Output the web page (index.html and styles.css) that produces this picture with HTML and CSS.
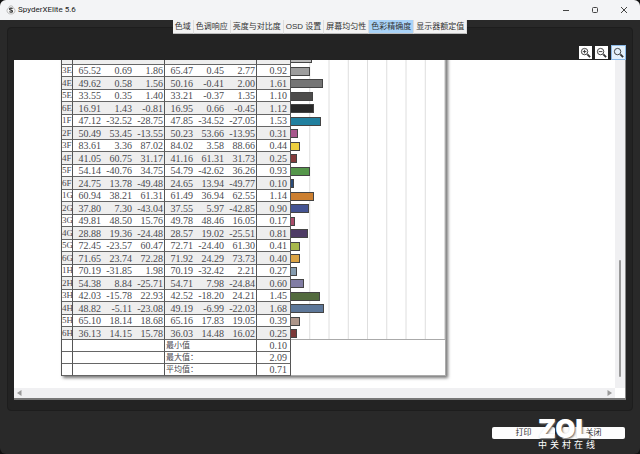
FILE: index.html
```html
<!DOCTYPE html>
<html lang="zh-CN">
<head>
<meta charset="utf-8">
<title>SpyderXElite 5.6</title>
<link rel="stylesheet" href="styles.css">
</head>
<body>
<div class="window">
  <header class="titlebar">
    <svg class="app-icon" viewBox="0 0 20 20" aria-hidden="true"><path d="M6 5.500a4 4 0 0 1 8 0a6 6 0 0 1 4 5.500c0 4-3 7-8 7s-8-3-8-7a6 6 0 0 1 4-5.500z" fill="#f8f8f8" stroke="#aaa" stroke-width="1.500"/><path d="M13 7.500c-1-2-6-2-6 .5c0 3 6 1.500 6 4.500c0 2.500-5 2.500-6 .5" fill="none" stroke="#333" stroke-width="2.500"/></svg>
    <span class="app-name">SpyderXElite 5.6</span>
    <div class="controls">
      <button aria-label="最小化"><svg viewBox="0 0 8 8"><path d="M1 4.500h6"/></svg></button>
      <button aria-label="最大化"><svg viewBox="0 0 8 8"><rect x="1.500" y="1.500" width="5" height="5" rx="1"/></svg></button>
      <button aria-label="关闭窗口"><svg viewBox="0 0 8 8"><path d="M1 1l6 6M7 1l-6 6"/></svg></button>
    </div>
  </header>
  <nav class="tabs">
    <button>色域</button><button>色调响应</button><button>亮度与对比度</button><button>OSD 设置</button><button>屏幕均匀性</button><button class="active">色彩精确度</button><button>显示器额定值</button>
  </nav>
  <main class="panel">
    <div class="tools">
      <button aria-label="放大"><svg viewBox="0 0 12 12"><circle cx="5" cy="5" r="3.500"/><path d="M3 5h4M5 3v4"/><path class="handle" d="M8 8l3 3"/></svg></button>
      <button aria-label="缩小"><svg viewBox="0 0 12 12"><circle cx="5" cy="5" r="3.500"/><path d="M3 5h4"/><path class="handle" d="M8 8l3 3"/></svg></button>
      <button class="selected" aria-label="适合窗口"><svg viewBox="0 0 12 12"><circle cx="5" cy="5" r="3.500"/><path class="handle" d="M8 8l3 3"/></svg></button>
    </div>
    <div class="viewer">
      <div class="canvas">
        <table class="report">
          <colgroup><col class="c-id"><col class="c-l"><col class="c-a"><col class="c-b"><col class="c-l"><col class="c-a"><col class="c-b"><col class="c-d"><col></colgroup>
          <tbody class="data">
            <tr><th></th><td></td><td></td><td></td><td></td><td></td><td></td><td></td><td><i style="--v:1.02;--c:#bbb"></i></td></tr>
            <tr><th>3E</th><td>65.52</td><td>0.69</td><td>1.86</td><td>65.47</td><td>0.45</td><td>2.77</td><td>0.92</td><td><i style="--v:.92;--c:#9d9d9d"></i></td></tr>
            <tr><th>4E</th><td>49.62</td><td>0.58</td><td>1.56</td><td>50.16</td><td>-0.41</td><td>2.00</td><td>1.61</td><td><i style="--v:1.61;--c:#757575"></i></td></tr>
            <tr><th>5E</th><td>33.55</td><td>0.35</td><td>1.40</td><td>33.21</td><td>-0.37</td><td>1.35</td><td>1.10</td><td><i style="--v:1.10;--c:#4d4c4b"></i></td></tr>
            <tr><th>6E</th><td>16.91</td><td>1.43</td><td>-0.81</td><td>16.95</td><td>0.66</td><td>-0.45</td><td>1.12</td><td><i style="--v:1.12;--c:#292929"></i></td></tr>
            <tr><th>1F</th><td>47.12</td><td>-32.52</td><td>-28.75</td><td>47.85</td><td>-34.52</td><td>-27.05</td><td>1.53</td><td><i style="--v:1.53;--c:#21809f"></i></td></tr>
            <tr><th>2F</th><td>50.49</td><td>53.45</td><td>-13.55</td><td>50.23</td><td>53.66</td><td>-13.95</td><td>0.31</td><td><i style="--v:.31;--c:#a7588d"></i></td></tr>
            <tr><th>3F</th><td>83.61</td><td>3.36</td><td>87.02</td><td>84.02</td><td>3.58</td><td>88.66</td><td>0.44</td><td><i style="--v:.44;--c:#edcf3f"></i></td></tr>
            <tr><th>4F</th><td>41.05</td><td>60.75</td><td>31.17</td><td>41.16</td><td>61.31</td><td>31.73</td><td>0.25</td><td><i style="--v:.25;--c:#843b3b"></i></td></tr>
            <tr><th>5F</th><td>54.14</td><td>-40.76</td><td>34.75</td><td>54.79</td><td>-42.62</td><td>36.26</td><td>0.93</td><td><i style="--v:.93;--c:#55964a"></i></td></tr>
            <tr><th>6F</th><td>24.75</td><td>13.78</td><td>-49.48</td><td>24.65</td><td>13.94</td><td>-49.77</td><td>0.10</td><td><i style="--v:.10;--c:#2b4c7b"></i></td></tr>
            <tr><th>1G</th><td>60.94</td><td>38.21</td><td>61.31</td><td>61.49</td><td>36.94</td><td>62.55</td><td>1.14</td><td><i style="--v:1.14;--c:#cc7f30"></i></td></tr>
            <tr><th>2G</th><td>37.80</td><td>7.30</td><td>-43.04</td><td>37.55</td><td>5.97</td><td>-42.85</td><td>0.90</td><td><i style="--v:.90;--c:#445493"></i></td></tr>
            <tr><th>3G</th><td>49.81</td><td>48.50</td><td>15.76</td><td>49.78</td><td>48.46</td><td>16.05</td><td>0.17</td><td><i style="--v:.17;--c:#a94d6a"></i></td></tr>
            <tr><th>4G</th><td>28.88</td><td>19.36</td><td>-24.48</td><td>28.57</td><td>19.02</td><td>-25.51</td><td>0.81</td><td><i style="--v:.81;--c:#4e3b65"></i></td></tr>
            <tr><th>5G</th><td>72.45</td><td>-23.57</td><td>60.47</td><td>72.71</td><td>-24.40</td><td>61.30</td><td>0.41</td><td><i style="--v:.41;--c:#a7b84b"></i></td></tr>
            <tr><th>6G</th><td>71.65</td><td>23.74</td><td>72.28</td><td>71.92</td><td>24.29</td><td>73.73</td><td>0.40</td><td><i style="--v:.40;--c:#dba344"></i></td></tr>
            <tr><th>1H</th><td>70.19</td><td>-31.85</td><td>1.98</td><td>70.19</td><td>-32.42</td><td>2.21</td><td>0.27</td><td><i style="--v:.27;--c:#859caf"></i></td></tr>
            <tr><th>2H</th><td>54.38</td><td>8.84</td><td>-25.71</td><td>54.71</td><td>7.98</td><td>-24.84</td><td>0.60</td><td><i style="--v:.60;--c:#817da4"></i></td></tr>
            <tr><th>3H</th><td>42.03</td><td>-15.78</td><td>22.93</td><td>42.52</td><td>-18.20</td><td>24.21</td><td>1.45</td><td><i style="--v:1.45;--c:#536b3e"></i></td></tr>
            <tr><th>4H</th><td>48.82</td><td>-5.11</td><td>-23.08</td><td>49.19</td><td>-6.99</td><td>-22.03</td><td>1.68</td><td><i style="--v:1.68;--c:#5d7799"></i></td></tr>
            <tr><th>5H</th><td>65.10</td><td>18.14</td><td>18.68</td><td>65.16</td><td>17.83</td><td>19.05</td><td>0.39</td><td><i style="--v:.39;--c:#ad968a"></i></td></tr>
            <tr><th>6H</th><td>36.13</td><td>14.15</td><td>15.78</td><td>36.03</td><td>14.48</td><td>16.02</td><td>0.25</td><td><i style="--v:.25;--c:#7b3838"></i></td></tr>
          </tbody>
          <tbody class="summary">
            <tr><td></td><td colspan="3"></td><td colspan="3">最小值</td><td>0.10</td><td></td></tr>
            <tr><td></td><td colspan="3"></td><td colspan="3">最大值：</td><td>2.09</td><td></td></tr>
            <tr><td></td><td colspan="3"></td><td colspan="3">平均值：</td><td>0.71</td><td></td></tr>
          </tbody>
        </table>
      </div>
      <div class="vbar"><div class="thumb"></div></div>
      <div class="hbar"><svg viewBox="0 0 5 6"><path d="M4.500 0v6L0 3z"/></svg><svg viewBox="0 0 5 6"><path d="M.5 0v6L5 3z"/></svg></div>
    </div>
  </main>
  <footer class="actions">
    <button>打印</button>
    <button>关闭</button>
    <div class="watermark"><strong>ZOL</strong><span>中关村在线</span></div>
  </footer>
</div>
</body>
</html>
```
FILE: styles.css
```css
* { box-sizing: border-box; }
html { background: #111; }
body { margin: 0; font-family: "Liberation Sans", "Noto Sans CJK SC", sans-serif; font-size: 8px; }
button { margin: 0; padding: 0; border: 0; font: inherit; color: inherit; }

.window { height: 100vh; display: flex; flex-direction: column; background: #292929; border-radius: 6px; overflow: hidden; }

.titlebar { height: 20px; flex: none; display: flex; align-items: center; padding: 0 12px 0 6px; background: #f3f4f6; color: #222; }
.app-icon { width: 10px; height: 10px; margin-right: 2px; }
.app-name { font-family: Roboto, sans-serif; line-height: 12px; }
.controls { margin-left: auto; display: flex; gap: 21px; }
.controls button { width: 8px; height: 8px; display: flex; background: none; }
.controls svg { width: 8px; height: 8px; fill: none; stroke: #444; }

.tabs { height: 14px; flex: none; display: flex; justify-content: center; position: relative; z-index: 1; }
.tabs button { padding: 0 2px; background: #f2f2f2; color: #333; line-height: 12px; border-right: 1px solid #ddd; border-bottom: 1px solid #bbb; white-space: nowrap; }
.tabs .active { background: #a9d3f8; }

.panel { flex: 1; min-height: 0; display: flex; flex-direction: column; margin: -7px 7px 0; padding: 17px 6px 10px; background: #232323; border: 1px solid #1d1d1d; border-radius: 4px; }
.tools { display: flex; justify-content: flex-end; align-items: center; gap: 3px; height: 15px; flex: none; }
.tools button { width: 13px; height: 13px; padding: 1px; background: #fff; display: flex; }
.tools .selected { width: 15px; height: 15px; padding: 1px; border: 1px solid #8ab8e6; background: #e4f1fc; }
.tools svg { width: 100%; height: 100%; fill: none; stroke: #333; }
.tools .handle { stroke-width: 2; }

.viewer { flex: 1; min-height: 0; display: grid; grid-template: minmax(0, 1fr) 10px / minmax(0, 1fr) 10px; background: #fff; border-right: 1px solid #888; border-bottom: 2px solid #777; }
.canvas { overflow: hidden; padding-left: 47px; }
.vbar { background: #f0f0f2; padding: 200px 4px 11px; }
.thumb { height: 100%; background: #999; border-radius: 1px; }
.hbar { background: #f0f0f2; display: flex; justify-content: space-between; align-items: center; padding: 0 3px; }
.hbar svg { width: 5px; height: 6px; fill: #999; }

.report { width: 385px; margin-top: -8px; table-layout: fixed; border-collapse: separate; border-spacing: 0; background: #fff; border-left: 1px solid #555; border-right: 1px solid #aaa; box-shadow: 2px 2px 3px #777; color: #4a4a50; font: 10px/11px "Liberation Serif", "Noto Sans CJK SC", serif; }
.c-id { width: 11px; }
.c-l { width: 29px; }
.c-a { width: 31px; }
.c-b { width: 32px; }
.c-d { width: 34px; }
.report td, .report th { height: 12px; padding: 0 1px 0 0; font-weight: 400; text-align: right; border-bottom: 1px solid #666; }
.data th { font-size: 9px; }
.data tr:nth-child(odd) > * { height: 13px; background-color: #eee; }
.data th, .data td:nth-child(4), .data td:nth-child(7), .data td:nth-child(8),
.summary td:not(:last-child) { border-right: 1px solid #555; }
.data td:nth-child(8), .summary td:nth-child(4) { padding-right: 3px; }
.data tr > td:last-child { padding: 0; border-bottom: 0; background: linear-gradient(to left, #ddd 1px, #fff 1px) 0 0 / 12.5% 100%; }
.data tr:last-child > td:last-child { border-bottom: 1px solid #aaa; }
.data i { display: block; height: 9px; width: calc(var(--v) * 12.5% + 1px); background: var(--c); border: 1px solid #444; border-left: 0; }
.summary td:nth-child(3) { padding-left: 1px; font-size: 8px; text-align: left; }
.summary td:last-child { border-bottom-color: transparent; }
.summary tr:last-child td:last-child { border-bottom-color: #aaa; }

.actions { height: 43px; flex: none; display: flex; justify-content: flex-end; align-items: flex-start; gap: 7px; padding: 16px 15px 0; position: relative; }
.actions button { width: 63px; height: 12px; background: #fdfdfd; border-radius: 2px; color: #333; line-height: 12px; }
.watermark { position: absolute; right: 42px; top: 8px; display: flex; flex-direction: column; align-items: flex-start; color: #fff; }
.watermark strong { font: 900 26px/20px Inter, sans-serif; text-shadow: 1px 1px 2px #666; }
.watermark span { font-size: 9px; line-height: 12px; letter-spacing: 3px; }
```
